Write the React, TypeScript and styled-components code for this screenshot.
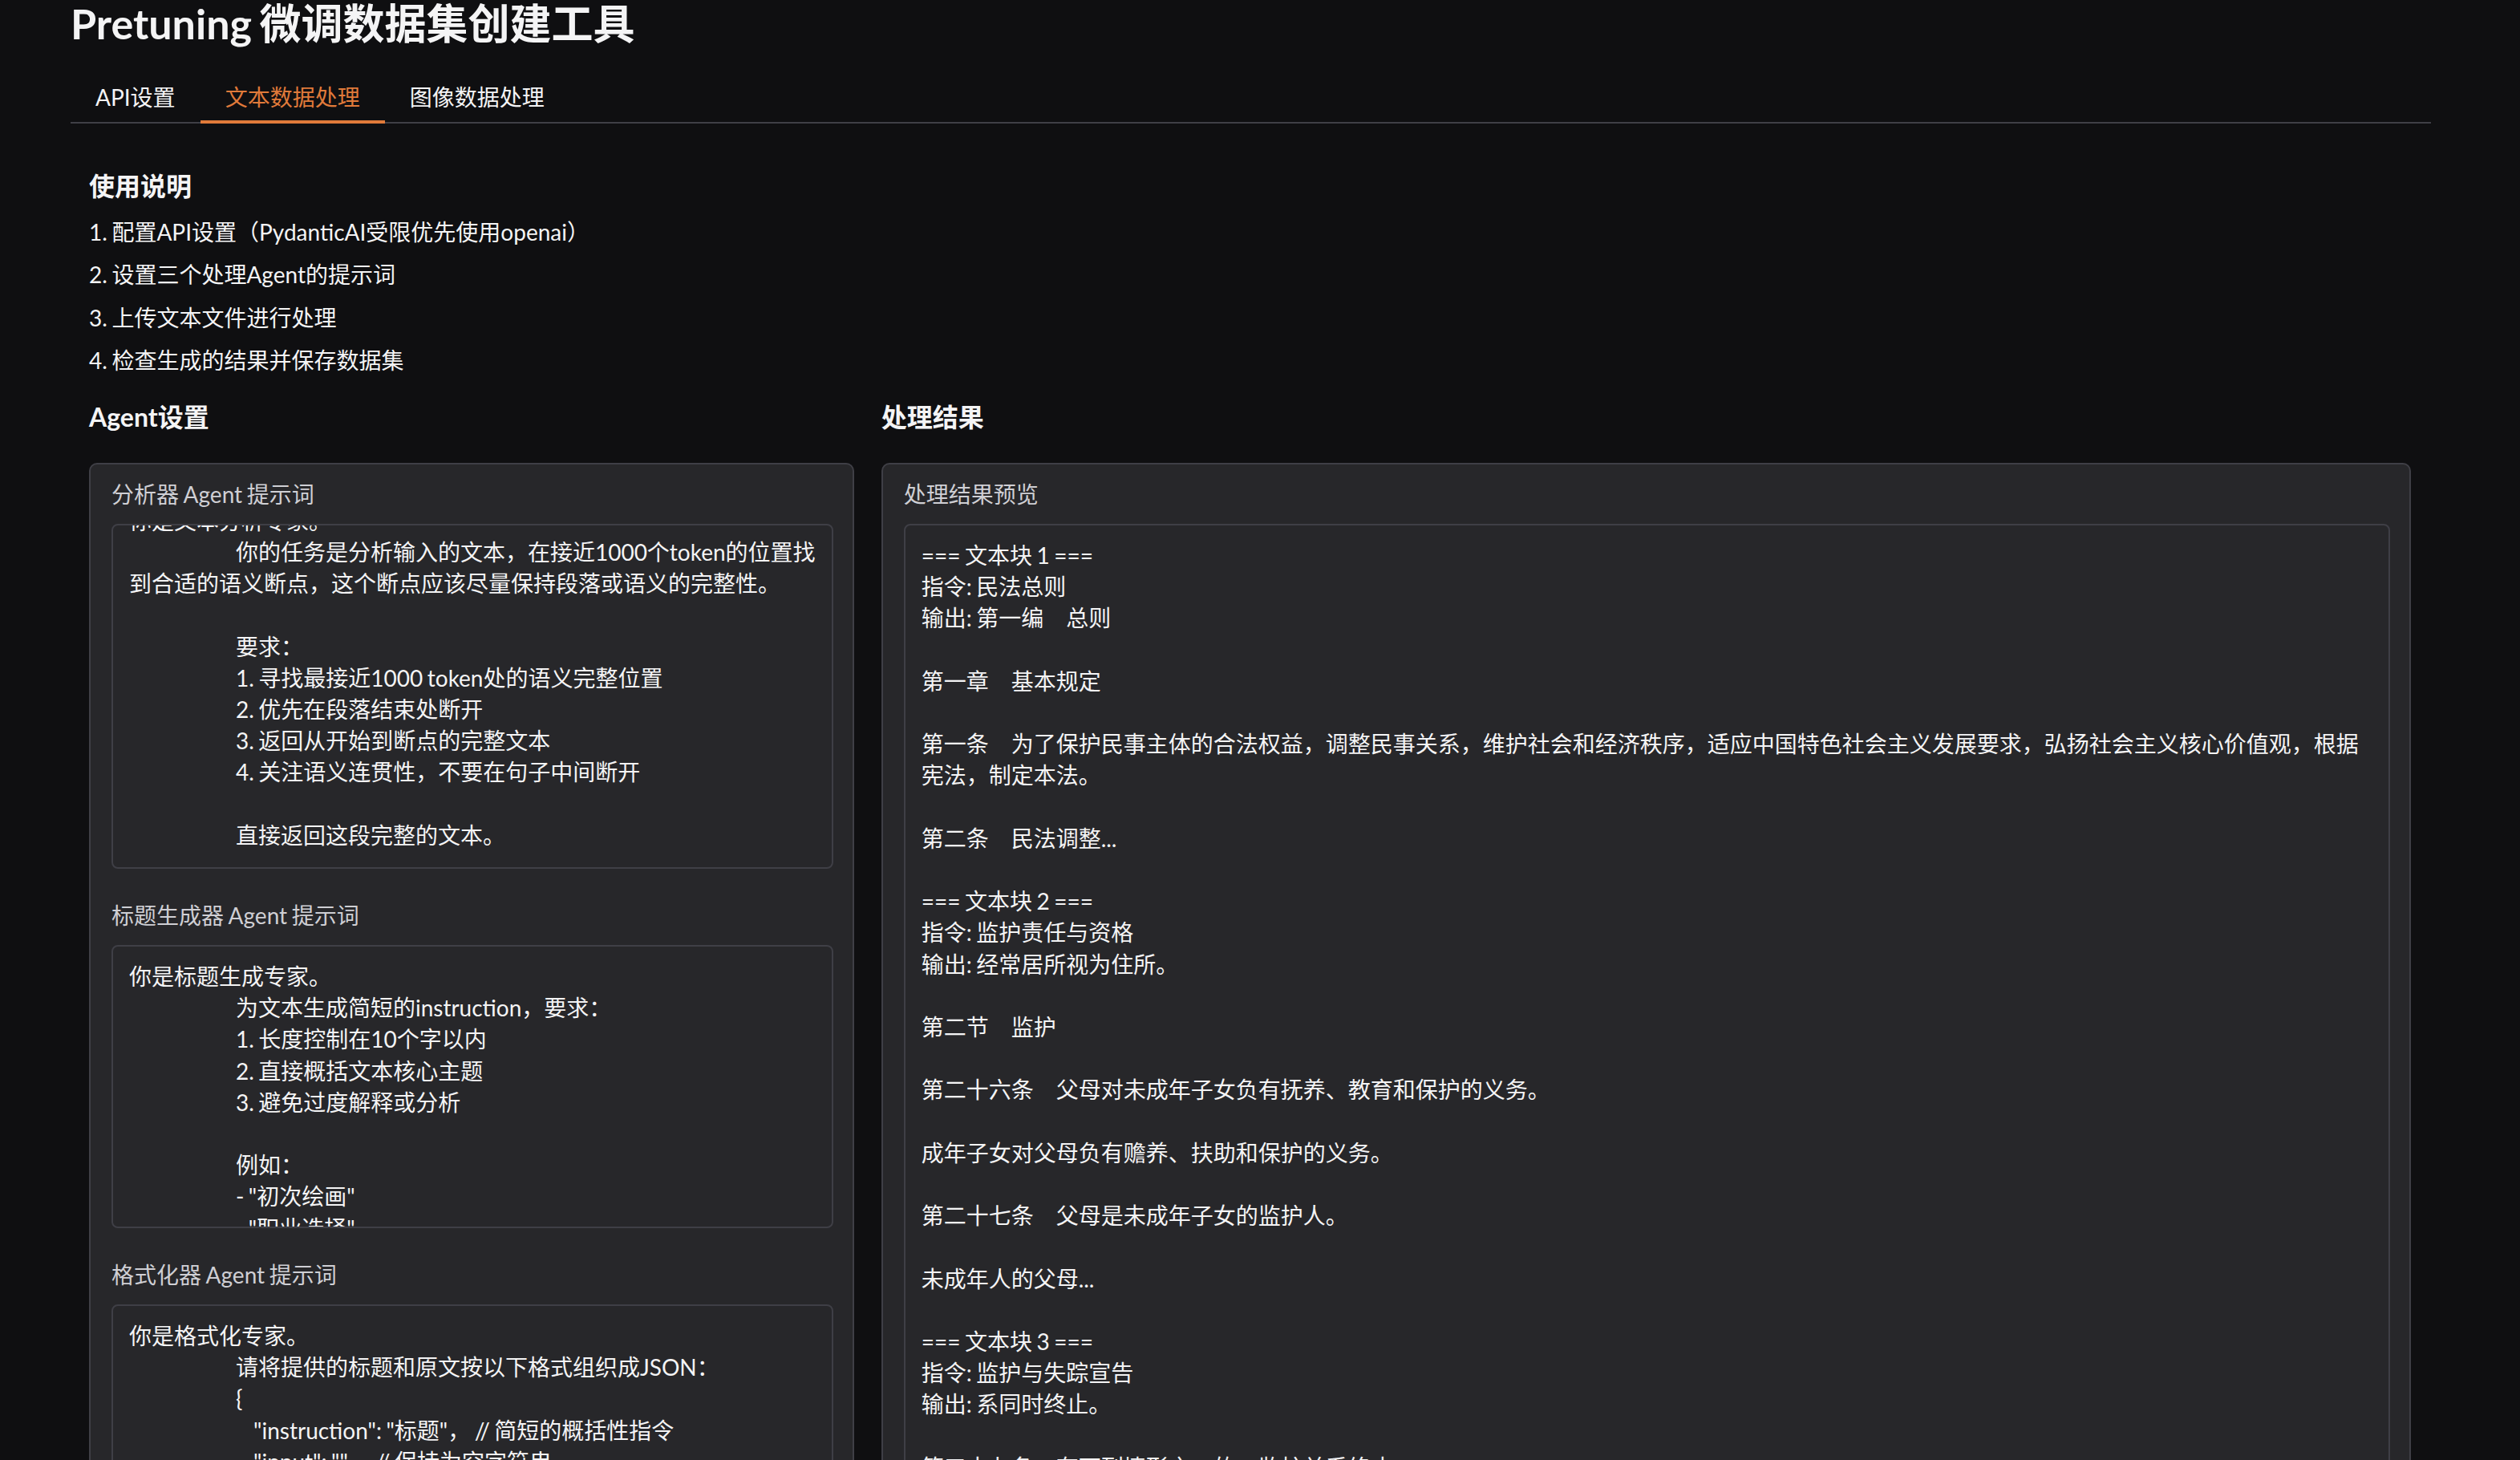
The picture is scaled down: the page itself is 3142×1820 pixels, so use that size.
import React from "react";
import styled, { createGlobalStyle } from "styled-components";

const GlobalStyle = createGlobalStyle`
  html, body {
    margin: 0;
    padding: 0;
    background: #0f0f11;
  }
  body {
    font-family: Lato, "Noto Sans CJK SC", "Noto Sans", sans-serif;
    color: #f4f4f5;
  }
  *, *::before, *::after {
    box-sizing: border-box;
  }
`;

const Page = styled.div`
  height: 100vh;
  overflow: hidden;
  padding: 0 111px 0 88px;
`;

const Title = styled.h1`
  margin: 0;
  font-size: 52px;
  line-height: 58px;
  font-weight: 700;
  word-spacing: -3px;
  color: #f4f4f5;
`;

const TabNav = styled.nav`
  display: flex;
  margin-top: 28px;
  border-bottom: 2px solid #3f3f46;
`;

const TabButton = styled.button<{ $active?: boolean }>`
  appearance: none;
  background: none;
  border: none;
  border-bottom: 4px solid ${(p) => (p.$active ? "#e07a3a" : "transparent")};
  margin-bottom: -2px;
  padding: 15px 31px 9px;
  font-family: inherit;
  font-size: 28px;
  line-height: 40px;
  color: ${(p) => (p.$active ? "#e07a3a" : "#f4f4f5")};
  cursor: pointer;
`;

const TabPanel = styled.section`
  padding: 56px 25px 0 23px;
`;

const SectionHeading = styled.h3`
  margin: 0;
  font-size: 32px;
  line-height: 44px;
  font-weight: 700;
  color: #f4f4f5;
`;

const Steps = styled.div`
  display: flex;
  flex-direction: column;
  gap: 13.33px;
  margin-top: 15px;
`;

const Step = styled.p`
  margin: 0;
  font-size: 28px;
  line-height: 40px;
  word-spacing: -1.6px;
  color: #f4f4f5;
`;

const Columns = styled.div`
  display: grid;
  grid-template-columns: minmax(0, 1fr) minmax(0, 2fr);
  gap: 34px;
  margin-top: 29px;
  align-items: start;
`;

const Column = styled.div`
  display: flex;
  flex-direction: column;
  gap: 35px;
  min-width: 0;
`;

const Panel = styled.div`
  background: #27272a;
  border: 2px solid #3f3f46;
  border-radius: 10px;
  padding: 17px 24px 40px 26px;
  display: flex;
  flex-direction: column;
  gap: 38px;
`;

const Field = styled.div`
  display: flex;
  flex-direction: column;
  gap: 17px;
`;

const FieldLabel = styled.span`
  display: block;
  font-size: 28px;
  line-height: 40px;
  word-spacing: -1.6px;
  color: #cfcfd4;
`;

const TextBox = styled.div<{ $height: number; $anchor?: "top" | "bottom" }>`
  height: ${(p) => p.$height}px;
  min-width: 0;
  border: 2px solid #3f3f46;
  border-radius: 8px;
  background: #27272a;
  padding: 18px 20px 20px;
  overflow: hidden;
  display: flex;
  flex-direction: column;
  justify-content: ${(p) => (p.$anchor === "bottom" ? "flex-end" : "flex-start")};
  font-size: 28px;
  line-height: 39.2px;
  white-space: pre;
  word-spacing: -1.63px;
  color: #f4f4f5;
`;

const TextContent = styled.div``;

const IND = " ".repeat(24);

const analyzerPrompt = `你是文本分析专家。
${IND}你的任务是分析输入的文本，在接近1000个token的位置找
到合适的语义断点，这个断点应该尽量保持段落或语义的完整性。

${IND}要求：
${IND}1. 寻找最接近1000 token处的语义完整位置
${IND}2. 优先在段落结束处断开
${IND}3. 返回从开始到断点的完整文本
${IND}4. 关注语义连贯性，不要在句子中间断开

${IND}直接返回这段完整的文本。`;

const titlePrompt = `你是标题生成专家。
${IND}为文本生成简短的instruction，要求：
${IND}1. 长度控制在10个字以内
${IND}2. 直接概括文本核心主题
${IND}3. 避免过度解释或分析

${IND}例如：
${IND}- "初次绘画"
${IND}- "职业选择"
${IND}- "工作困境"`;

const formatPrompt = `你是格式化专家。
${IND}请将提供的标题和原文按以下格式组织成JSON：
${IND}{
${IND}    "instruction": "标题"， // 简短的概括性指令
${IND}    "input": ""， // 保持为空字符串
${IND}    "output": "原文" // 完整的原文内容
${IND}}`;

const resultText = `=== 文本块 1 ===
指令: 民法总则
输出: 第一编　总则

第一章　基本规定

第一条　为了保护民事主体的合法权益，调整民事关系，维护社会和经济秩序，适应中国特色社会主义发展要求，弘扬社会主义核心价值观，根据
宪法，制定本法。

第二条　民法调整...

=== 文本块 2 ===
指令: 监护责任与资格
输出: 经常居所视为住所。

第二节　监护

第二十六条　父母对未成年子女负有抚养、教育和保护的义务。

成年子女对父母负有赡养、扶助和保护的义务。

第二十七条　父母是未成年子女的监护人。

未成年人的父母...

=== 文本块 3 ===
指令: 监护与失踪宣告
输出: 系同时终止。

第三十九条　有下列情形之一的，监护关系终止：
（一）被监护人取得或者恢复完全民事行为能力；`;

const tabs = ["API设置", "文本数据处理", "图像数据处理"];

const steps = [
  "1. 配置API设置（PydanticAI受限优先使用openai）",
  "2. 设置三个处理Agent的提示词",
  "3. 上传文本文件进行处理",
  "4. 检查生成的结果并保存数据集",
];

export default function App() {
  return (
    <>
      <GlobalStyle />
      <Page>
        <Title>Pretuning 微调数据集创建工具</Title>
        <TabNav>
          {tabs.map((t, i) => (
            <TabButton key={t} $active={i === 1}>
              {t}
            </TabButton>
          ))}
        </TabNav>
        <TabPanel>
          <SectionHeading>使用说明</SectionHeading>
          <Steps>
            {steps.map((s) => (
              <Step key={s}>{s}</Step>
            ))}
          </Steps>
          <Columns>
            <Column>
              <SectionHeading>Agent设置</SectionHeading>
              <Panel>
                <Field>
                  <FieldLabel>分析器 Agent 提示词</FieldLabel>
                  <TextBox $height={430} $anchor="bottom">
                    <TextContent>{analyzerPrompt}</TextContent>
                  </TextBox>
                </Field>
                <Field>
                  <FieldLabel>标题生成器 Agent 提示词</FieldLabel>
                  <TextBox $height={353}>
                    <TextContent>{titlePrompt}</TextContent>
                  </TextBox>
                </Field>
                <Field>
                  <FieldLabel>格式化器 Agent 提示词</FieldLabel>
                  <TextBox $height={353}>
                    <TextContent>{formatPrompt}</TextContent>
                  </TextBox>
                </Field>
              </Panel>
            </Column>
            <Column>
              <SectionHeading>处理结果</SectionHeading>
              <Panel>
                <Field>
                  <FieldLabel>处理结果预览</FieldLabel>
                  <TextBox $height={1216}>
                    <TextContent>{resultText}</TextContent>
                  </TextBox>
                </Field>
              </Panel>
            </Column>
          </Columns>
        </TabPanel>
      </Page>
    </>
  );
}
